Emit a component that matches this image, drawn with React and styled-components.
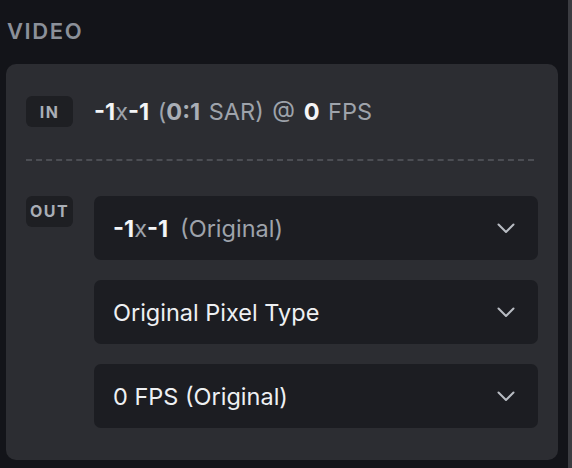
import React from 'react'
import styled, { createGlobalStyle } from 'styled-components'

const GlobalStyle = createGlobalStyle`
  html, body {
    margin: 0;
    padding: 0;
    background: #131419;
  }
  body {
    font-family: Inter, "Noto Sans", sans-serif;
    -webkit-font-smoothing: antialiased;
  }
`

const Page = styled.div`
  display: flex;
  width: 572px;
  height: 468px;
  overflow: hidden;
`

const Panel = styled.div`
  flex: 1;
  display: flex;
  flex-direction: column;
  padding: 0 10px 0 6px;
`

const Scrollbar = styled.div`
  width: 4px;
  background: #3b3c41;
`

const SectionTitle = styled.h2`
  margin: 0;
  padding: 18px 0 0 1px;
  height: 64px;
  box-sizing: border-box;
  font-size: 22px;
  line-height: 26px;
  font-weight: 600;
  letter-spacing: 1.6px;
  color: #8b9099;
`

const Card = styled.div`
  background: #2c2d32;
  border-radius: 10px;
  padding: 32px 20px 32px 20px;
  display: flex;
  flex-direction: column;
`

const Row = styled.div`
  display: flex;
  align-items: ${p => (p.$top ? 'flex-start' : 'center')};
  gap: 21px;
`

const Badge = styled.div`
  flex: none;
  width: 47px;
  height: 31px;
  border-radius: 6px;
  background: #1e1f23;
  color: #a9aeb6;
  font-size: 16px;
  font-weight: 700;
  letter-spacing: 1.5px;
  display: flex;
  justify-content: center;
  padding-top: ${p => (p.$top ? '5px' : '0')};
  align-items: ${p => (p.$top ? 'flex-start' : 'center')};
  box-sizing: border-box;
`

const Summary = styled.div`
  font-size: 23.5px;
  word-spacing: 2px;
  color: #9ea3ab;
`

const Strong = styled.b`
  font-weight: 700;
  color: ${p => (p.$dim ? '#a9aeb6' : '#f4f5f7')};
`

const Divider = styled.hr`
  margin: 32px 4px 35px 0;
  border: none;
  border-top: 2px dashed #4c4e54;
`

const Selects = styled.div`
  flex: 1;
  display: flex;
  flex-direction: column;
  gap: 20px;
`

const Select = styled.div`
  height: 64px;
  border-radius: 7px;
  background: #1c1d22;
  display: flex;
  align-items: center;
  justify-content: space-between;
  padding: 0 23px 0 19px;
  font-size: 23.5px;
  color: #eef0f3;
`

const Muted = styled.span`
  color: #9ea3ab;
`

const Note = styled(Muted)`
  margin-left: 12px;
`

const Chevron = () => (
  <svg width="18" height="11" viewBox="0 0 18 11" fill="none">
    <polyline
      points="1.5,1.5 9,9 16.5,1.5"
      stroke="#b8bcc3"
      strokeWidth="2"
      strokeLinecap="round"
      strokeLinejoin="round"
    />
  </svg>
)

const options = [
  {
    key: 'size',
    label: (
      <>
        <Strong>-1</Strong>
        <Muted>x</Muted>
        <Strong>-1</Strong>
        <Note>(Original)</Note>
      </>
    ),
  },
  { key: 'pixel', label: 'Original Pixel Type' },
  { key: 'fps', label: '0 FPS (Original)' },
]

const App = () => (
  <Page>
    <GlobalStyle />
    <Panel>
      <SectionTitle>VIDEO</SectionTitle>
      <Card>
        <Row>
          <Badge>IN</Badge>
          <Summary>
            <Strong>-1</Strong>x<Strong>-1</Strong> (<Strong $dim>0:1</Strong>{' '}
            SAR) @ <Strong>0</Strong> FPS
          </Summary>
        </Row>
        <Divider />
        <Row $top>
          <Badge $top>OUT</Badge>
          <Selects>
            {options.map(o => (
              <Select key={o.key}>
                <span>{o.label}</span>
                <Chevron />
              </Select>
            ))}
          </Selects>
        </Row>
      </Card>
    </Panel>
    <Scrollbar />
  </Page>
)

export default App
